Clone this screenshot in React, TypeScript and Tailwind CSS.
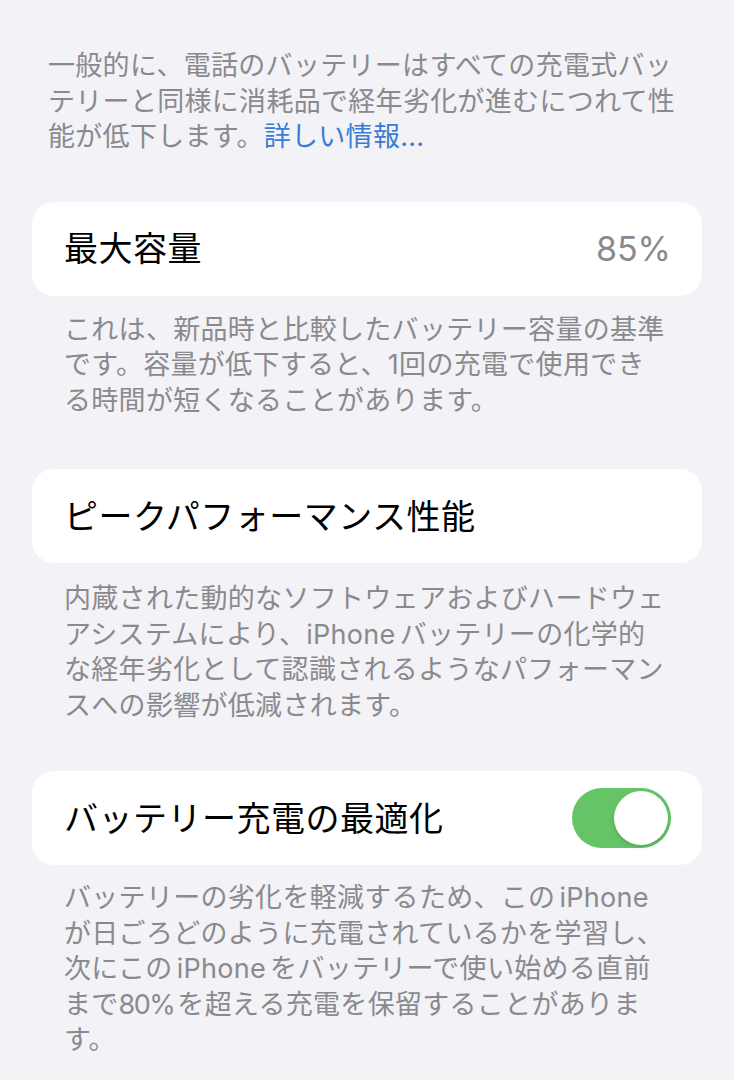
import React from "react";

const font = { fontFamily: 'Inter, "Noto Sans CJK JP", sans-serif' };

// 行ごとに改行位置を固定する
const Lines = ({ lines }: { lines: React.ReactNode[] }) => (
  <>
    {lines.map((l, i) => (
      <span key={i} className="block whitespace-nowrap">
        {l}
      </span>
    ))}
  </>
);

const Footer = ({ lines, className = "" }: { lines: React.ReactNode[]; className?: string }) => (
  <p className={`px-[64px] text-[27px] leading-[35.5px] tracking-[0.3px] text-[#8a8a8e] ${className}`}>
    <Lines lines={lines} />
  </p>
);

const Card = ({ children, className = "" }: { children: React.ReactNode; className?: string }) => (
  <div
    className={`mx-[32px] h-[94px] rounded-[22px] bg-white pl-[32px] pr-[31px] flex items-center justify-between ${className}`}
  >
    {children}
  </div>
);

const IPhone = () => <span className="mx-[4px]">iPhone</span>;

export default function App() {
  return (
    <div className="min-h-[1080px] w-full bg-[#f2f2f7] pt-[48px]" style={font}>
      <p className="px-[48px] text-[27px] leading-[35.5px] tracking-[0.3px] text-[#8a8a8e]">
        <Lines
          lines={[
            "一般的に、電話のバッテリーはすべての充電式バッ",
            "テリーと同様に消耗品で経年劣化が進むにつれて性",
            <>
              能が低下します。<span className="text-[#3a7bd5]">詳しい情報...</span>
            </>,
          ]}
        />
      </p>

      {/* 最大容量 */}
      <Card className="mt-[47px]">
        <span className="text-[34px] tracking-[0.5px] text-black">最大容量</span>
        <span className="text-[34px] text-[#8a8a8e]">85%</span>
      </Card>
      <Footer
        className="mt-[16px]"
        lines={[
          "これは、新品時と比較したバッテリー容量の基準",
          "です。容量が低下すると、1回の充電で使用でき",
          "る時間が短くなることがあります。",
        ]}
      />

      {/* ピークパフォーマンス */}
      <Card className="mt-[51px]">
        <span className="text-[34px] tracking-[0.5px] text-black">ピークパフォーマンス性能</span>
      </Card>
      <Footer
        className="mt-[18px]"
        lines={[
          "内蔵された動的なソフトウェアおよびハードウェ",
          <>
            アシステムにより、
            <span className="mr-[4px]">iPhone</span>
            バッテリーの化学的
          </>,
          "な経年劣化として認識されるようなパフォーマン",
          "スへの影響が低減されます。",
        ]}
      />

      {/* 充電の最適化 */}
      <Card className="mt-[48px]">
        <span className="text-[34px] tracking-[0.5px] text-black">バッテリー充電の最適化</span>
        <div className="w-[99px] h-[60px] rounded-full bg-[#65c466] p-[3px] flex justify-end">
          <div className="w-[54px] h-[54px] rounded-full bg-white shadow-[0_2px_4px_rgba(0,0,0,0.15)]" />
        </div>
      </Card>
      <Footer
        className="mt-[15px]"
        lines={[
          <>
            バッテリーの劣化を軽減するため、この
            <IPhone />
          </>,
          "が日ごろどのように充電されているかを学習し、",
          <>
            次にこの
            <IPhone />
            をバッテリーで使い始める直前
          </>,
          <>
            まで<span className="tracking-[-1.5px] mr-[3px]">80%</span>を超える充電を保留することがありま
          </>,
          "す。",
        ]}
      />
    </div>
  );
}
